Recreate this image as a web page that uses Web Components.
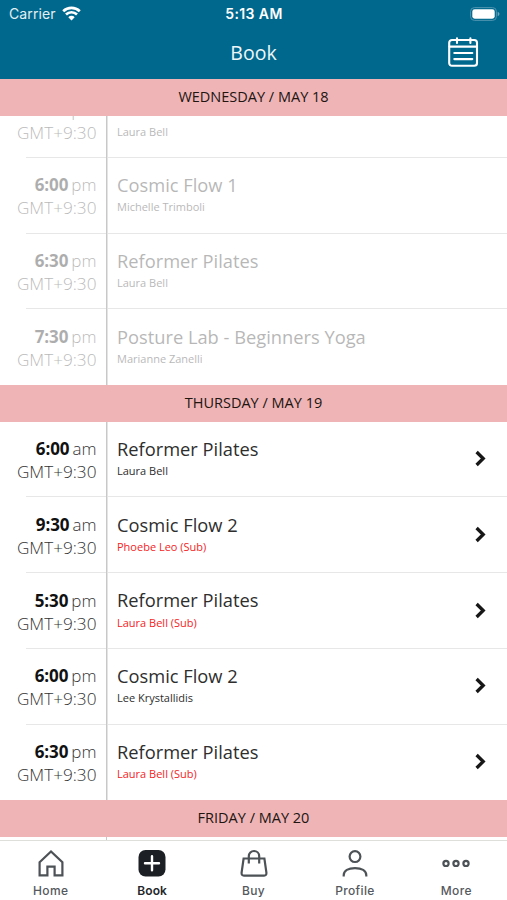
<!DOCTYPE html>
<html lang="en"><head><meta charset="utf-8"><title>Book</title>
<style>
html,body{margin:0;padding:0}
body{width:507px;height:900px;overflow:hidden;background:#fff;font-family:"Open Sans","Noto Sans",sans-serif}
</style></head><body>
<booking-app></booking-app>
<script>
const define=(name,html)=>customElements.define(name,class extends HTMLElement{
  connectedCallback(){
    if(this.shadowRoot)return;
    const r=this.attachShadow({mode:'open'});
    r.innerHTML=typeof html==='function'?html(this):html;
  }
});

define('status-bar',`<style>
:host{display:grid;grid-template-columns:1fr auto 1fr;align-items:center;height:27px;box-sizing:border-box;padding:1px 7px 0 9px;color:#fff;font:500 14px/20px Inter,sans-serif}
.l{display:flex;align-items:center;gap:6px;font-weight:400;font-size:14px;letter-spacing:.12px;color:#e4eff3}
.t{font-weight:600;font-size:14px;letter-spacing:.4px;margin-right:1px}
.r{display:flex;justify-content:flex-end}
svg{display:block}
.l svg{position:relative;top:-1px}
</style>
<div class="l"><span>Carrier</span><svg width="19" height="15" viewBox="0 0 19 15" fill="none" stroke="#fff" stroke-width="2.7"><path d="M1.2 5.3a12 12 0 0 1 16.6 0M4 8.5a7.9 7.9 0 0 1 11 0"/><path d="M9.5 14.4 6.3 11.2a4.5 4.5 0 0 1 6.4 0z" fill="#fff" stroke="none"/></svg></div>
<div class="t">5:13 AM</div>
<div class="r"><svg width="30" height="14" viewBox="0 0 30 14"><rect x=".6" y=".6" width="25.8" height="12.8" rx="3.8" fill="none" stroke="#4f94b0" stroke-width="1"/><rect x="2.3" y="2.3" width="22.4" height="9.4" rx="2.4" fill="#fff"/><path d="M27.7 4.8c2.3.8 2.3 3.6 0 4.4z" fill="#6ba7bf"/></svg></div>`);

define('nav-bar',`<style>
:host{display:grid;grid-template-columns:1fr auto 1fr;align-items:center;height:52px;box-sizing:border-box;padding:0 28px;color:#eff6f8}
h1{grid-column:2;margin:0;font-weight:400;font-size:19.5px;line-height:26px}
svg{display:block;justify-self:end}
</style><h1><slot></slot></h1>
<svg width="32" height="32" viewBox="0 0 32 32" fill="none" stroke="#fff" stroke-width="2.1" stroke-linecap="round"><rect x="2.2" y="3" width="27.8" height="25.8" rx="2.8"/><path d="M2.5 9.6h27M10 1.3v4.6M23.4 1.3v4.6M7.3 16h18M7.3 22.1h18"/></svg>`);

define('day-header',`<style>
:host{display:flex;align-items:center;justify-content:center;flex:none;height:36.5px;position:relative;box-sizing:border-box;padding-bottom:.4px;background:#efb4b5;color:#211512;font-size:14.5px;line-height:20px}
</style><span><slot></slot></span>`);

define('class-row',e=>{
  const d=e.dataset;
  return `<style>
:host{display:grid;grid-template-columns:106px 2px 1fr auto;height:75.75px;flex:none;position:relative;box-sizing:border-box;color:#2e2e2e;background:linear-gradient(#e7e7e7,#e7e7e7) 26px 100%/100% 1px no-repeat}
:host([last]){background:none}
:host([past]) .time,:host([past]) .info{opacity:.34}
.time{text-align:right;padding:15.6px 9.5px 0 0;font-weight:300;font-size:17.2px;line-height:23px;white-space:nowrap;color:#333}
.hm{font-size:17px}
b{font-weight:700;color:#111;font-size:17px;margin-right:3px;letter-spacing:-.1px}
.rule{background:linear-gradient(90deg,#c8c8c8 50%,#e4e4e4 50%);width:2px}
.info{padding:14.3px 0 0 9px}
.name{font-size:18.3px;line-height:25px;white-space:nowrap}
.who{font-size:11px;line-height:15px;margin-top:2.3px}
:host([sub]) .who{color:#f32424}
svg{display:block;margin:28.7px 20px 0 0}
</style><div class="time"><div class="hm"><b>${d.time}</b>${d.half}</div><div>GMT+9:30</div></div><div class="rule"></div>
<div class="info"><div class="name">${d.name}</div><div class="who">${d.who}</div></div>
${e.hasAttribute('past')?'':'<svg width="13" height="17" viewBox="0 0 13 17" fill="none" stroke="#171717" stroke-width="3.3"><path d="M2.6 2 9.2 8.5 2.6 15"/></svg>'}`});

const icons={
home:'<path d="M2.6 13.2 14 2.4l11.4 10.8v13.2h-7.8v-8.8h-7.2v8.8H2.6z"/>',
book:'<rect x=".5" y="1" width="27" height="26.6" rx="7" fill="#1c2024" stroke="none"/><path d="M14 7.3v14M7 14.3h14" stroke="#fff" stroke-width="2.4" stroke-linecap="round"/>',
buy:'<path d="M3.6 9.5h20.8l2 14.2q.2 2.9-2.3 2.9H3.9q-2.5 0-2.3-2.9z"/><path d="M8.8 14.4V7.2a5.2 5.2 0 0 1 10.4 0v7.2"/>',
profile:'<circle cx="14" cy="7.6" r="5.4"/><path d="M2.7 27.5v-1.2c0-4.6 4.7-7.2 11.3-7.2s11.3 2.6 11.3 7.2v1.2"/>',
more:'<circle cx="4" cy="14.4" r="2.6"/><circle cx="14" cy="14.4" r="2.6"/><circle cx="24" cy="14.4" r="2.6"/>'};
define('tab-item',e=>`<style>
:host{display:flex;flex-direction:column;align-items:center;flex:1;padding-top:8px;color:#55595d;font:500 12px/16px Inter,sans-serif;letter-spacing:.35px}
:host([active]){color:#23272b;font-weight:600;letter-spacing:.1px}
svg{display:block;margin-bottom:6px}
</style><svg width="28" height="28" viewBox="0 0 28 28" fill="none" stroke="#4d5256" stroke-width="2.2">${icons[e.getAttribute('icon')]}</svg><span><slot></slot></span>`);

define('tab-bar',`<style>:host{display:flex;position:relative;flex:none;height:60px;box-sizing:border-box;background:#fff;border-top:1px solid #dededb}</style><slot></slot>`);

const row=(time,name,who,flags='')=>`<class-row data-time="${time.split(' ')[0]}" data-half="${time.split(' ')[1]}" data-name="${name}" data-who="${who}" ${flags}></class-row>`;
define('booking-app',`<style>
:host{display:flex;flex-direction:column;width:507px;height:900px;overflow:hidden;background:#fff}
header{background:#00688d;height:79.4px;flex:none}
.current{z-index:1}
.list{display:flex;flex-direction:column;flex:1;min-height:0;overflow:hidden;margin-top:-33.9px}
.rest{width:107px;flex:none;height:20px;box-sizing:border-box;border-right:1px solid #c8c8c8}
</style>
<header><status-bar></status-bar><nav-bar>Book</nav-bar></header>
<day-header class="current">WEDNESDAY / MAY 18</day-header>
<div class="list">
${row('5:30 pm','Reformer Pilates','Laura Bell','past')}
${row('6:00 pm','Cosmic Flow 1','Michelle Trimboli','past')}
${row('6:30 pm','Reformer Pilates','Laura Bell','past')}
${row('7:30 pm','Posture Lab - Beginners Yoga','Marianne Zanelli','past last')}
<day-header>THURSDAY / MAY 19</day-header>
${row('6:00 am','Reformer Pilates','Laura Bell')}
${row('9:30 am','Cosmic Flow 2','Phoebe Leo (Sub)','sub')}
${row('5:30 pm','Reformer Pilates','Laura Bell (Sub)','sub')}
${row('6:00 pm','Cosmic Flow 2','Lee Krystallidis')}
${row('6:30 pm','Reformer Pilates','Laura Bell (Sub)','sub last')}
<day-header>FRIDAY / MAY 20</day-header>
<div class="rest"></div>
</div>
<tab-bar><tab-item icon="home">Home</tab-item><tab-item icon="book" active>Book</tab-item><tab-item icon="buy">Buy</tab-item><tab-item icon="profile">Profile</tab-item><tab-item icon="more">More</tab-item></tab-bar>`);
</script>
</body></html>
